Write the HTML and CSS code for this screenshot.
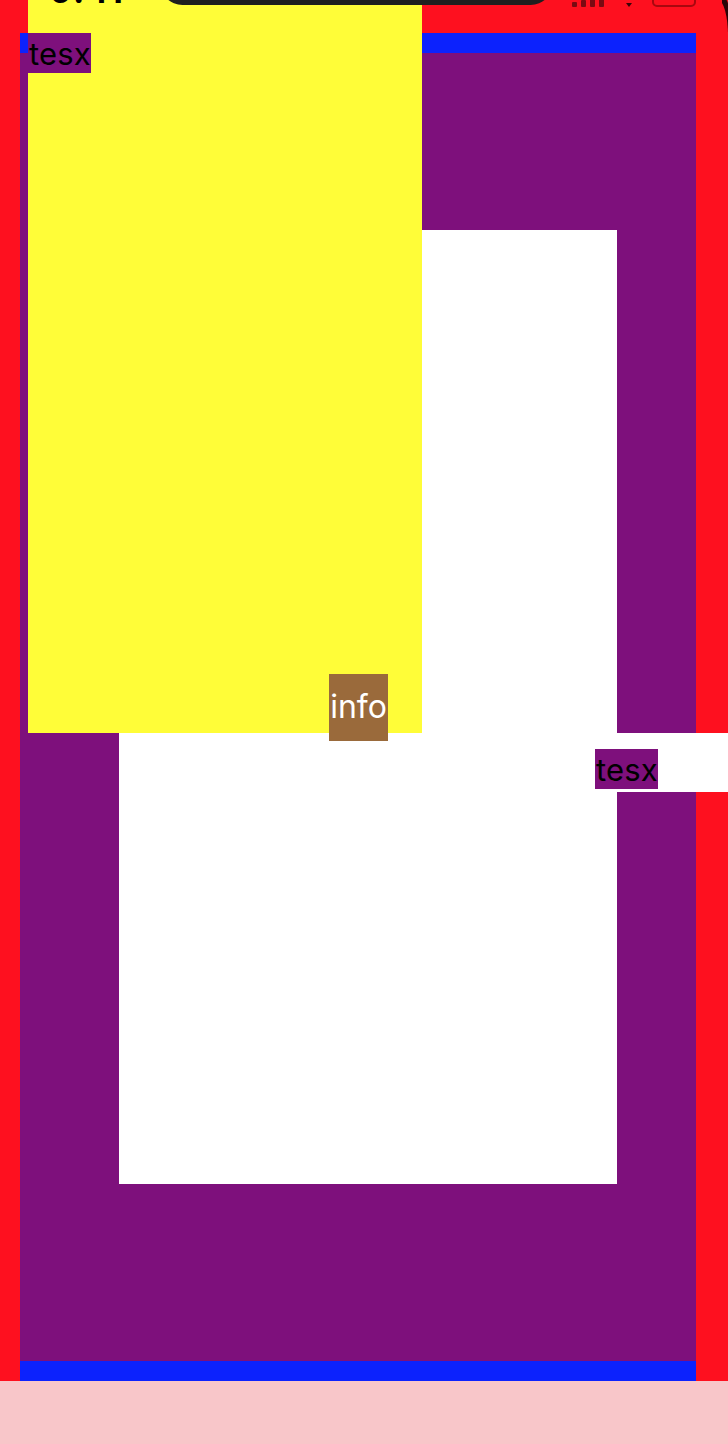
FILE: index.html
```html
<!DOCTYPE html>
<html>
<head>
<meta charset="utf-8">
<link rel="stylesheet" href="styles.css">
</head>
<body>
<div class="screen">
  <div class="frame">
    <div class="card"></div>
  </div>

  <div class="panel">
    <span class="tag tag-top">tesx</span>
  </div>

  <span class="info">info</span>

  <div class="strip">
    <span class="tag tag-side">tesx</span>
  </div>

  <div class="status">
    <span class="time">9:41</span>
    <div class="island"></div>
    <div class="icons">
      <svg class="signal" width="32" height="12" viewBox="0 0 32 12">
        <rect x="0" y="7" width="5" height="5" rx="1" fill="#7a0a12"/>
        <rect x="9" y="5" width="5" height="7" rx="1" fill="#7a0a12"/>
        <rect x="18" y="2" width="5" height="10" rx="1" fill="#7a0a12"/>
        <rect x="27" y="0" width="5" height="12" rx="1" fill="#7a0a12"/>
      </svg>
      <svg class="wifi" width="10" height="12" viewBox="0 0 10 12">
        <path d="M2 8 L5 12 L8 8 Z" fill="#3a0508"/>
      </svg>
      <div class="battery"></div>
    </div>
  </div>
  <div class="corner"></div>
</div>
<div class="footer"></div>
</body>
</html>
```

FILE: styles.css
```css
html, body {
  margin: 0;
  padding: 0;
}

body {
  width: 728px;
  height: 1444px;
  overflow: hidden;
  background: #f8c6c9;
  font-family: Inter, "Liberation Sans", sans-serif;
}

.screen {
  position: relative;
  height: 1381px;
  box-sizing: border-box;
  padding: 33px 32px 0 20px;
  background: #fe101f;
  overflow: hidden;
}

.frame {
  height: 1348px;
  box-sizing: border-box;
  border-top: 20px solid #0c22fd;
  border-bottom: 20px solid #0c22fd;
  background: #7e107c;
  padding: 177px 0 0 99px;
}

.card {
  width: 498px;
  height: 954px;
  background: #ffffff;
}

.panel {
  position: absolute;
  left: 28px;
  top: 0;
  width: 394px;
  height: 733px;
  box-sizing: border-box;
  padding-top: 33px;
  background: #fffd38;
}

.tag {
  display: block;
  width: 63px;
  height: 40px;
  box-sizing: border-box;
  padding-left: 1px;
  background: #7e107c;
  color: #000;
  font-size: 31px;
  line-height: 42px;
  letter-spacing: 0.2px;
  white-space: nowrap;
  overflow: hidden;
}

.info {
  position: absolute;
  left: 329px;
  top: 674px;
  width: 59px;
  height: 67px;
  background: #9a6a3b;
  color: #ffffff;
  font-size: 32px;
  line-height: 66px;
  text-align: center;
}

.strip {
  position: absolute;
  left: 617px;
  top: 733px;
  width: 111px;
  height: 59px;
  box-sizing: border-box;
  padding-top: 16px;
  background: #ffffff;
}

.tag-side {
  margin-left: -22px;
}

.status {
  position: absolute;
  left: 0;
  top: 0;
  width: 728px;
  height: 6px;
}

.time {
  position: absolute;
  left: 50px;
  top: -23px;
  font-size: 34px;
  font-weight: 700;
  line-height: 28px;
  color: #000;
  letter-spacing: 1px;
}

.island {
  position: absolute;
  left: 160px;
  top: -40px;
  width: 393px;
  height: 45px;
  background: #1f1f1f;
  border-radius: 24px;
}

.icons {
  position: absolute;
  left: 572px;
  top: -9px;
  display: flex;
  align-items: flex-end;
  gap: 20px;
}

.signal {
  display: block;
}

.wifi {
  display: block;
}

.battery {
  width: 40px;
  height: 12px;
  border: 2px solid #a8080f;
  border-radius: 5px;
  margin-left: -2px;
}

.corner {
  position: absolute;
  right: 0;
  top: 0;
  width: 10px;
  height: 36px;
  border-top-right-radius: 10px 36px;
  box-shadow: 4px -4px 0 0 #2a0306;
  pointer-events: none;
}

.footer {
  height: 63px;
  background: #f8c6c9;
}
```
